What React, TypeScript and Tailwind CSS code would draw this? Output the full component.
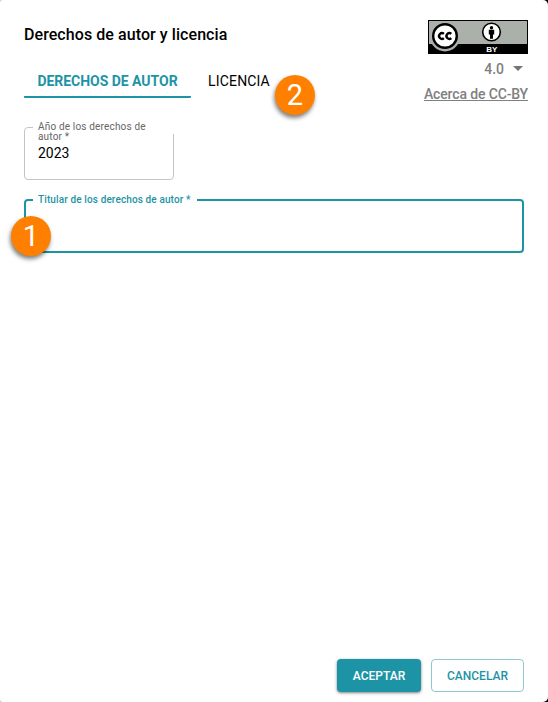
function Marker({ n, className }: { n: number; className: string }) {
  return (
    <span
      className={`absolute flex h-10 w-10 items-center justify-center rounded-full bg-[#ff8000] font-['Roboto',sans-serif] text-[29px] leading-none font-normal text-white shadow-[-1px_3px_4px_rgba(0,0,0,0.5)] ${className}`}
    >
      {n}
    </span>
  );
}

function LicenseBadge() {
  return (
    <svg width="100" height="34" viewBox="0 0 100 34" className="block shrink-0">
      <rect width="100" height="34" fill="#000" />
      <rect x="1" y="1" width="98" height="23" fill="#abb1aa" />
      <circle cx="17" cy="16.5" r="15" fill="#abb1aa" />
      <circle cx="17" cy="16" r="11.8" fill="#fff" stroke="#000" strokeWidth="2.4" />
      <g fill="none" stroke="#000" strokeWidth="2.4">
        <path d="M15.9 13.8A2.9 2.9 0 1 0 15.9 18.2" />
        <path d="M23.3 13.8A2.9 2.9 0 1 0 23.3 18.2" />
      </g>
      <circle cx="63.5" cy="12" r="8.8" fill="#fff" stroke="#000" strokeWidth="1.6" />
      <circle cx="63.5" cy="7.7" r="1.7" />
      <path d="M60.8 9.8h5.4v4.6h-1.2v4.4h-3v-4.4h-1.2z" />
      <text x="63.7" y="32" textAnchor="middle" fontSize="8" fontWeight="700" fill="#fff" fontFamily="Liberation Sans, Arial, sans-serif">
        BY
      </text>
    </svg>
  );
}

export default function App() {
  return (
    <div className="h-[702px] w-[548px] overflow-hidden bg-[linear-gradient(to_right,#ccc_50%,#000_50%)]">
      <main className="flex h-full w-full flex-col rounded-l-[3px] rounded-r-[5px] bg-white px-6 font-['Roboto',sans-serif] font-medium text-black">
        <header className="-mr-1 flex h-[98px] justify-between">
          <div className="flex flex-col">
            <h1 className="mt-[23px] h-6 text-base leading-6 font-medium tracking-[0.07px]">Derechos de autor y licencia</h1>
            <nav className="relative mt-[17px] flex h-[34px] text-sm leading-[34px]">
              <button className="w-[167px] rounded-b-[1px] border-b-2 border-[#1d94a5] leading-[34px] font-bold tracking-[-0.03px] text-[#1d94a5]">
                DERECHOS DE AUTOR
              </button>
              <button className="w-24 leading-[34px] font-normal tracking-[0.15px]">LICENCIA</button>
              <Marker n={2} className="top-[11px] left-[251px]" />
            </nav>
          </div>
          <div className="flex flex-col items-end pt-5">
            <LicenseBadge />
            <div className="mt-[5px] flex h-5 items-center gap-[9px] pr-[5px] text-sm text-[#808080]">
              4.0
              <span className="-mt-[2px] border-x-[5px] border-t-[5px] border-x-transparent border-t-[#757575]" />
            </div>
            <a className="mt-[5px] h-5 text-sm leading-5 tracking-[-0.14px] whitespace-nowrap text-[#808080] underline">Acerca de CC-BY</a>
          </div>
        </header>

        <section className="relative mt-[29px] h-[53px] w-[150px] rounded border border-[#c4c4c4] pt-[12px] pl-[13px]">
          <label className="absolute -top-[6px] left-[8px] h-[12px] w-[141px] bg-white pl-[5px] text-[10px] leading-[10px] font-normal tracking-[0.17px] text-[#666]">
            Año de los derechos de
            <br />
            autor *
          </label>
          <span className="relative block text-sm leading-[26px] font-normal">2023</span>
        </section>

        <section className="relative mt-[19px] h-[54px] w-[500px] rounded border-2 border-[#1d94a5]">
          <label className="absolute -top-[7px] left-[7px] h-3 w-[164px] bg-white pl-[5px] text-[10px] leading-[12px] tracking-[0.12px] whitespace-nowrap text-[#1d94a5]">
            Titular de los derechos de autor *
          </label>
          <Marker n={1} className="top-[15px] -left-[15px]" />
        </section>

        <footer className="mt-auto mb-[10px] flex justify-end gap-[10px] text-xs">
          <button className="h-[33px] w-[84px] rounded bg-[#1d94a5] text-white shadow-[0_1px_3px_rgba(0,0,0,0.5)]">ACEPTAR</button>
          <button className="h-[33px] w-[93px] rounded border border-[#8ec9d1] text-[#1d94a5]">CANCELAR</button>
        </footer>
      </main>
    </div>
  );
}
